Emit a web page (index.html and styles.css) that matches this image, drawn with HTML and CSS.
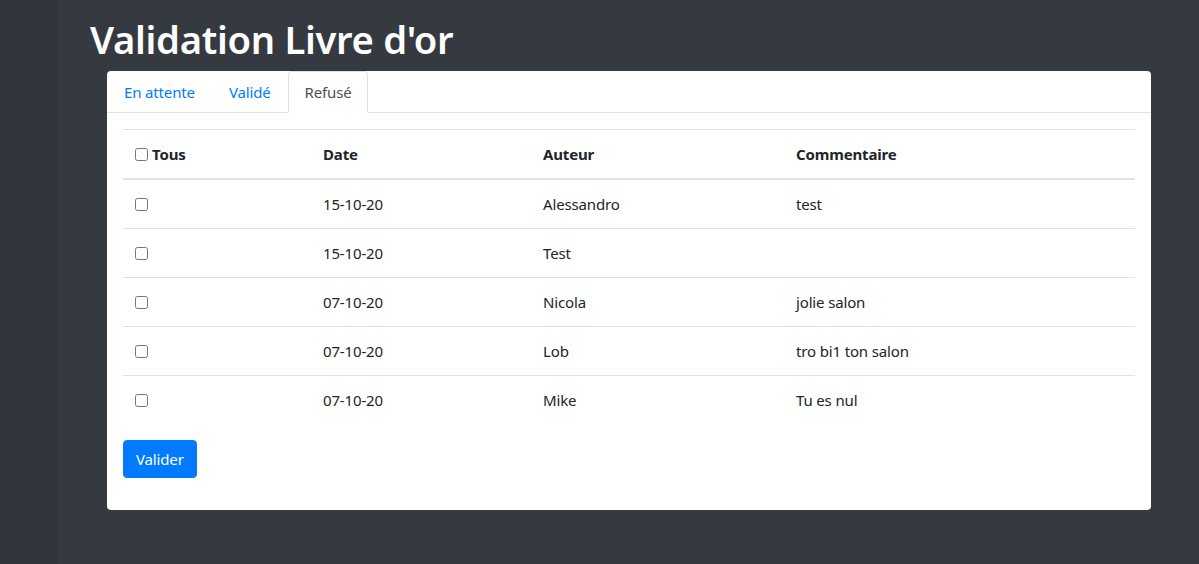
FILE: index.html
```html
<!DOCTYPE html>
<html lang="fr">
<head>
<meta charset="utf-8">
<title>Validation Livre d'or</title>
<link rel="stylesheet" href="styles.css">
</head>
<body>
<div class="layout">
  <aside class="sidebar"></aside>
  <main class="main">
    <h1 class="title">Validation Livre d'or</h1>
    <div class="card">
      <ul class="tabs">
        <li><a class="tab" href="#">En attente</a></li>
        <li><a class="tab" href="#">Validé</a></li>
        <li><a class="tab active" href="#">Refusé</a></li>
      </ul>
      <div class="card-body">
        <form class="form">
          <table class="table">
            <thead>
              <tr>
                <th class="c1"><label class="all"><input type="checkbox" class="chk">Tous</label></th>
                <th class="c2">Date</th>
                <th class="c3">Auteur</th>
                <th class="c4">Commentaire</th>
              </tr>
            </thead>
            <tbody>
              <tr><td><input type="checkbox" class="chk"></td><td>15-10-20</td><td>Alessandro</td><td>test</td></tr>
              <tr><td><input type="checkbox" class="chk"></td><td>15-10-20</td><td>Test</td><td></td></tr>
              <tr><td><input type="checkbox" class="chk"></td><td>07-10-20</td><td>Nicola</td><td>jolie salon</td></tr>
              <tr><td><input type="checkbox" class="chk"></td><td>07-10-20</td><td>Lob</td><td>tro bi1 ton salon</td></tr>
              <tr><td><input type="checkbox" class="chk"></td><td>07-10-20</td><td>Mike</td><td>Tu es nul</td></tr>
            </tbody>
          </table>
          <button type="button" class="btn">Valider</button>
        </form>
      </div>
    </div>
  </main>
</div>
</body>
</html>
```

FILE: styles.css
```css
* { box-sizing: border-box; }
html, body { margin: 0; height: 100%; }
body {
  background: #343a40;
  font-family: "Noto Sans", "Open Sans", sans-serif;
  font-size: 15px;
  letter-spacing: -0.15px;
  line-height: 24px;
  color: #212529;
}
.layout { display: flex; min-height: 100%; }
.sidebar { width: 58px; flex: 0 0 58px; background: #30343b; }
.main { flex: 1; padding: 15px 0 0 32px; }
.title {
  margin: 0 0 8px;
  font-size: 38.2px;
  font-weight: 600;
  letter-spacing: -0.3px;
  line-height: 48px;
  color: #fff;
}
.card {
  margin-left: 17px;
  width: 1044px;
  background: #fff;
  border-radius: 4px;
}
.tabs {
  list-style: none;
  margin: 0;
  padding: 0;
  display: flex;
  border-bottom: 1px solid #dee2e6;
}
.tabs li { margin-bottom: -1px; }
.tab {
  display: block;
  padding: 8px 16px;
  border: 1px solid transparent;
  border-top-left-radius: 4px;
  border-top-right-radius: 4px;
  color: #007bff;
  text-decoration: none;
}
.tab.active {
  color: #495057;
  background: #fff;
  border-color: #dee2e6 #dee2e6 #fff;
}
.card-body { padding: 16px; }
.form { margin-bottom: 16px; }
.table {
  width: 100%;
  border-collapse: collapse;
  margin-bottom: 15px;
  table-layout: fixed;
}
.table th, .table td {
  padding: 12px;
  height: 49px;
  text-align: left;
  vertical-align: top;
  border-top: 1px solid #dee2e6;
}
.table thead th {
  border-bottom: 2px solid #dee2e6;
  font-weight: 700;
}
.c1 { width: 188px; }
.c2 { width: 220px; }
.c3 { width: 253px; }
.all { display: flex; align-items: center; gap: 4px; height: 24px; }
.chk {
  width: 13px;
  height: 13px;
  margin: 0;
  vertical-align: -1px;
}
.btn {
  display: inline-block;
  font: inherit;
  letter-spacing: inherit;
  color: #fff;
  background: #007bff;
  border: 1px solid #007bff;
  border-radius: 4px;
  padding: 6px 12px;
  line-height: 24px;
}
```
